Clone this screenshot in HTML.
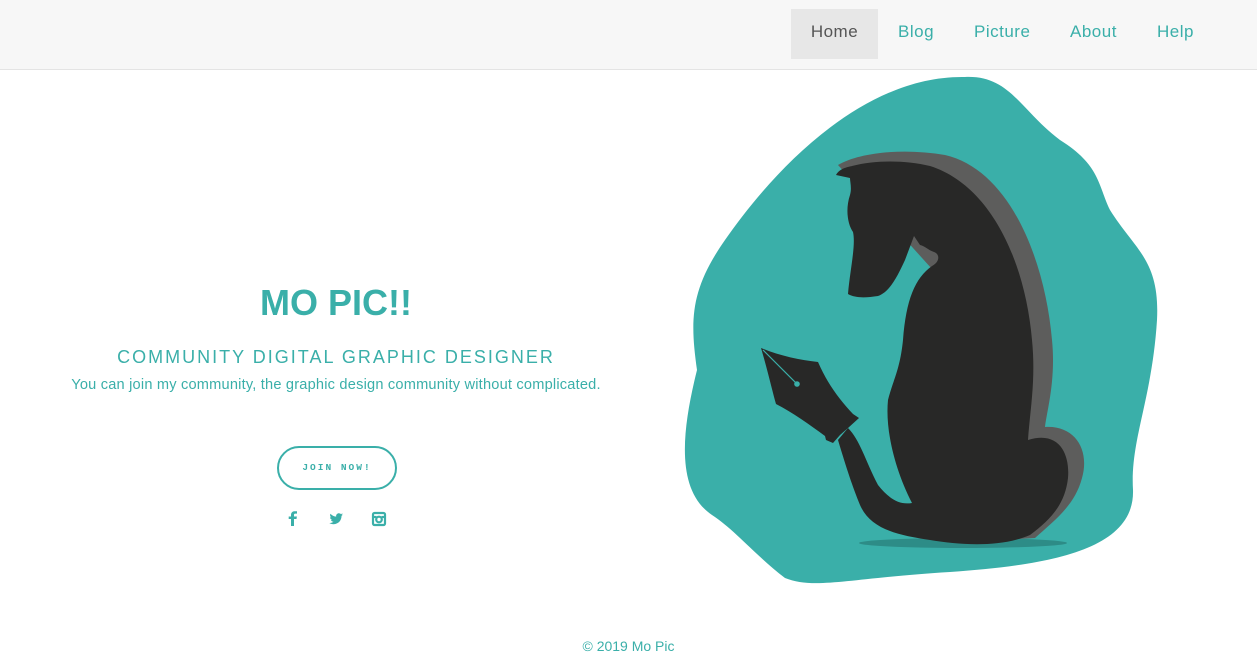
<!DOCTYPE html>
<html><head><meta charset="utf-8"><style>
*{margin:0;padding:0;box-sizing:border-box}
body{width:1257px;height:669px;background:#fff;font-family:"Liberation Sans",sans-serif;position:relative;overflow:hidden;color:#3aafa9}
.nav{position:absolute;left:0;top:0;width:1257px;height:70px;background:#f7f7f7;border-bottom:1px solid #e4e4e4}
.nav a{position:absolute;top:9px;height:50px;line-height:46px;font-size:17px;color:#3aafa9;letter-spacing:.5px;text-align:center}
.home{left:791px;width:87px;background:#e7e7e7;color:#555!important}
h1{position:absolute;left:0;width:672px;text-align:center;top:282px;font-size:36px;font-weight:bold;color:#3aafa9}
.sub{position:absolute;left:0;width:672px;text-align:center;top:347px;font-size:18px;letter-spacing:2px}
.p{position:absolute;left:0;width:672px;text-align:center;top:377px;font-size:14.6px;letter-spacing:.2px}
.btn{position:absolute;left:277px;top:446px;width:120px;height:44px;border:2px solid #3aafa9;border-radius:22px;text-align:center;line-height:40px;font-family:"Liberation Mono",monospace;font-weight:bold;font-size:9.5px;letter-spacing:2px}
.foot{position:absolute;left:0;width:1257px;text-align:center;top:638px;font-size:14px}
</style></head><body>
<div class="nav">
<a class="home">Home</a>
<a style="left:898px">Blog</a>
<a style="left:974px">Picture</a>
<a style="left:1070px">About</a>
<a style="left:1157px">Help</a>
</div>
<h1>MO PIC!!</h1>
<div class="sub">COMMUNITY DIGITAL GRAPHIC DESIGNER</div>
<div class="p">You can join my community, the graphic design community without complicated.</div>
<div class="btn">JOIN NOW!</div>
<svg style="position:absolute;left:0;top:0" width="1257" height="669">
<g fill="#3aafa9">
<path d="M291 526h3v-7h2.5l.4-2.5h-2.9v-1.6c0-.8.3-1.3 1.3-1.3h1.7v-2.3c-.4 0-1.3-.1-2.3-.1-2.2 0-3.7 1.3-3.7 3.7v1.6h-2.3v2.5h2.3z"/>
<path d="M343 514.5c-.5.2-1 .4-1.6.4.6-.3 1-.9 1.2-1.5-.5.3-1.100.5-1.7.7-.5-.5-1.2-.9-2-.9-1.5 0-2.8 1.2-2.8 2.8 0 .2 0 .4.1.6-2.3-.1-4.3-1.2-5.7-2.9-.2.4-.4.9-.4 1.4 0 1 .5 1.8 1.2 2.3-.5 0-.9-.1-1.3-.3 0 1.4 1 2.5 2.2 2.7-.4.1-.8.2-1.3.1.4 1.1 1.4 1.9 2.6 1.9-1 .8-2.2 1.2-3.5 1.2h-.7c1.2.8 2.7 1.200 4.3 1.2 5.1 0 7.9-4.2 7.9-7.9v-.4c.6-.4 1-.9 1.4-1.4z"/>
</g>
<g fill="none" stroke="#3aafa9" stroke-width="2.2"><rect x="373" y="513" width="12" height="12" rx="1.5"/><circle cx="379" cy="519.5" r="2.8"/><line x1="373" y1="517" x2="376.5" y2="517"/><line x1="381.5" y1="517" x2="385" y2="517"/></g>
<path fill="#3aafa9" d="M965 77C1010 75 1020 110 1060 140C1100 165 1098 185 1110 210C1135 250 1160 260 1157 320C1152 400 1130 440 1133 490C1135 550 1050 565 950 572C850 578 815 590 785 578C755 555 735 530 712 515C675 490 682 430 697 370C690 320 690 290 725 240C770 175 860 75 965 77Z"/>
<ellipse cx="963" cy="543" rx="104" ry="5" fill="#2d8c87"/>
<path fill="#5d5d5c" d="M838 165C860 152 905 148 945 155C1010 170 1045 260 1052 340C1056 380 1047 410 1045 427C1075 425 1090 450 1082 478C1075 505 1055 520 1035 538L1000 540L960 300Z"/>
<path fill="#282827" d="M836 175C840 168 848 167 852 166C875 160 905 160 930 166C990 185 1025 260 1032 340C1036 380 1030 410 1028 440C1060 430 1070 455 1068 478C1065 505 1050 520 1030 535C1000 548 960 545 930 540C895 535 870 528 860 505C852 485 847 470 838 440L848 428C860 440 865 460 878 485C890 500 900 505 912 503C895 470 885 430 888 400C893 380 900 370 903 340C906 300 915 278 932 266C940 262 940 254 934 252C928 250 925 246 920 245L914 236L905 260C898 275 890 292 878 296C865 298 855 298 848 294C850 270 856 245 853 232C848 225 845 210 850 195C852 188 850 182 850 178Z"/>
<path fill="#282827" d="M761 348C780 356 800 360 818 362C828 385 840 400 853 414L859 418L848 428L840 435L833 443L826 440L825 436C810 425 792 412 776 404C772 390 767 368 761 348Z"/>
<line x1="763" y1="350" x2="796" y2="383" stroke="#3aafa9" stroke-width="1.2"/>
<circle cx="797" cy="384" r="2.8" fill="#3aafa9"/>
</svg>
<div class="foot">© 2019 Mo Pic</div>
</body></html>
